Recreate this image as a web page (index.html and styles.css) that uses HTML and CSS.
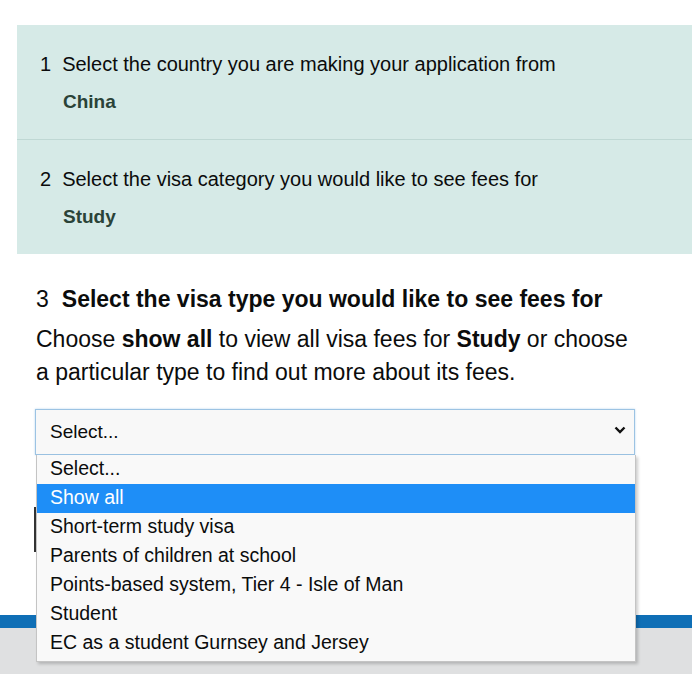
FILE: index.html
```html
<!DOCTYPE html>
<html lang="en">
<head>
    <meta charset="UTF-8">
    <meta name="viewport" content="width=device-width, initial-scale=1.0">
    <title>Visa fees</title>
    <link rel="stylesheet" href="styles.css">
</head>
<body>
    <div class="answers">
        <div class="step">
            <div class="step-label"><span class="num">1</span>Select the country you are making your application from</div>
            <div class="step-value">China</div>
        </div>
        <div class="step">
            <div class="step-label"><span class="num">2</span>Select the visa category you would like to see fees for</div>
            <div class="step-value">Study</div>
        </div>
    </div>

    <div class="question">
        <h2><span class="num">3</span><strong>Select the visa type you would like to see fees for</strong></h2>
        <p>Choose <strong>show all</strong> to view all visa fees for <strong>Study</strong> or choose a particular type to find out more about its fees.</p>

        <div class="select-wrap">
            <div class="select-box">
                <span>Select...</span>
                <svg class="chevron" width="12" height="8" viewBox="0 0 12 8"><path d="M1.5 1.5 L6 6 L10.5 1.5" fill="none" stroke="#111" stroke-width="2.4"/></svg>
            </div>
            <ul class="options">
                <li>Select...</li>
                <li class="active">Show all</li>
                <li>Short-term study visa</li>
                <li>Parents of children at school</li>
                <li>Points-based system, Tier 4 - Isle of Man</li>
                <li>Student</li>
                <li>EC as a student Gurnsey and Jersey</li>
            </ul>
        </div>

        <button class="submit">Continue</button>
    </div>

    <footer class="footer"></footer>
</body>
</html>
```

FILE: styles.css
```css
body {
    margin: 0;
    background: #fff;
    font-family: "Liberation Sans", Arial, sans-serif;
    color: #0b0c0c;
}
.answers {
    margin: 25px 0 0 17px;
    background-color: #d6eae7;
}
.step {
    padding: 27px 0 23px 23px;
    height: 64px;
}
.step + .step {
    border-top: 1px solid #bfd8d4;
}
.step-label {
    font-size: 20px;
    line-height: 24px;
}
.step-label .num {
    margin-right: 11px;
}
.step-value {
    margin-top: 14px;
    padding-left: 23px;
    font-size: 19px;
    line-height: 24px;
    font-weight: bold;
    color: #2a4338;
}
.question {
    padding: 0 0 0 36px;
}
.question h2 {
    margin: 31px 0 0;
    font-size: 23px;
    line-height: 28px;
    font-weight: normal;
}
.question h2 .num {
    margin-right: 13px;
}
.question p {
    margin: 10px 0 0;
    width: 605px;
    font-size: 23px;
    line-height: 33px;
}
.select-wrap {
    position: relative;
    width: 600px;
    margin-top: 20px;
    margin-left: -1px;
}
.select-box {
    height: 44px;
    border: 1px solid #9cc3e3;
    box-shadow: 0 0 2px #b8d6ee;
    background: #f8f8f8;
    display: flex;
    align-items: center;
    justify-content: space-between;
    padding: 0 8px 0 14px;
    font-size: 19px;
}
.chevron {
    margin-top: -4px;
}
.options {
    position: absolute;
    top: 46px;
    left: 1px;
    width: 600px;
    margin: 0;
    padding: 0 0 3px;
    list-style: none;
    background: #f9f9f9;
    border: 1px solid #c4c4c4;
    border-top: none;
    box-sizing: border-box;
    box-shadow: 2px 2px 3px rgba(0,0,0,0.2);
    z-index: 2;
}
.options li {
    height: 29px;
    line-height: 27px;
    padding-left: 13px;
    font-size: 19.5px;
}
.options li.active {
    background: #1e8ef7;
    color: #fff;
}
.submit {
    display: block;
    margin: 52px 0 0 -2px;
    height: 45px;
    width: 140px;
    border: none;
    border-left: 2px solid #333;
    background: #00703c;
    color: #fff;
    font-size: 19px;
}
.footer {
    margin-top: 63px;
    height: 46px;
    border-top: 13px solid #0f6fb6;
    background: #dfe0e1;
}
```
